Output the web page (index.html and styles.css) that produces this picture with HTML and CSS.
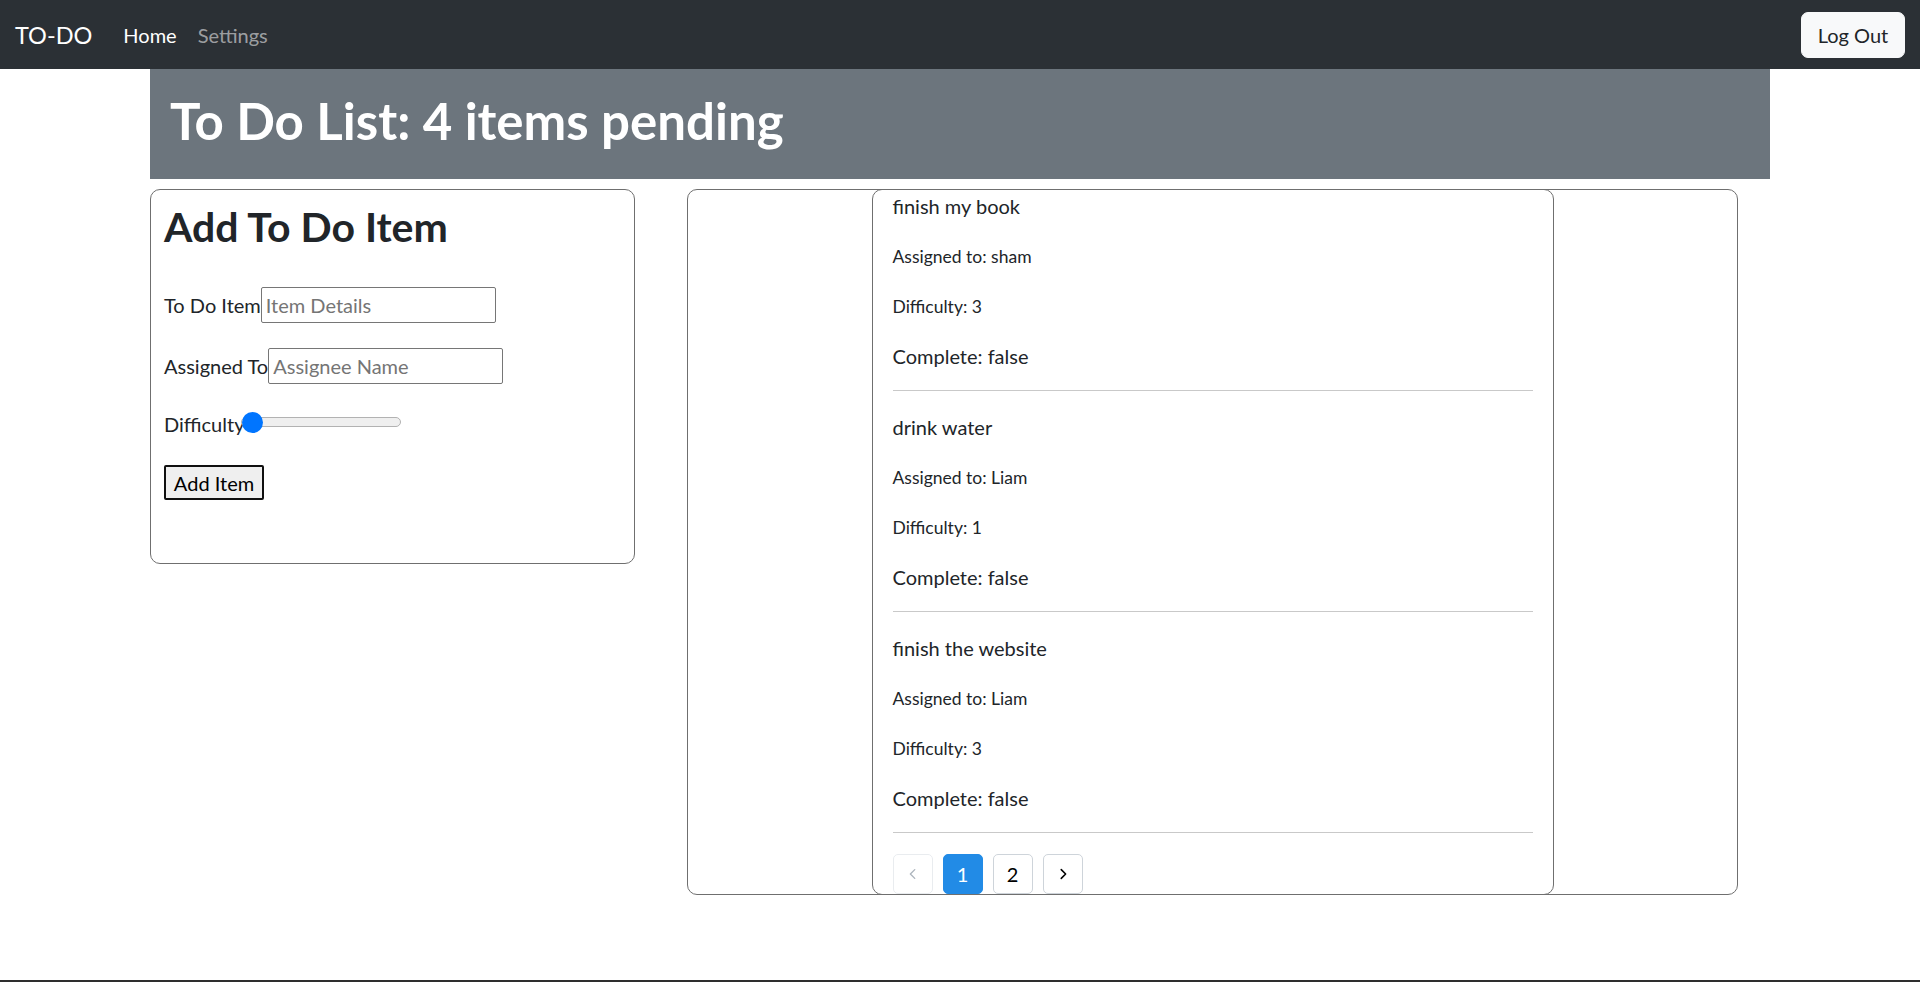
FILE: index.html
```html
<!DOCTYPE html>
<html lang="en">
<head>
<meta charset="utf-8">
<title>To Do List</title>
<link rel="stylesheet" href="styles.css">
</head>
<body>
<nav class="navbar">
  <div class="nav-left">
    <span class="brand">TO-DO</span>
    <a class="nav-link active" href="#">Home</a>
    <a class="nav-link" href="#">Settings</a>
  </div>
  <button class="logout" type="button">Log Out</button>
</nav>
<main class="container">
  <header class="banner"><h1>To Do List: 4 items pending</h1></header>
  <section class="content">
    <form class="add-card">
      <h2>Add To Do Item</h2>
      <label class="field">To Do Item<input class="text-input" type="text" placeholder="Item Details"></label>
      <label class="field">Assigned To<input class="text-input" type="text" placeholder="Assignee Name"></label>
      <label class="field range-field">Difficulty<input class="range" type="range" min="1" max="5" value="1"></label>
      <div class="btn-row"><button class="add-btn" type="button">Add Item</button></div>
    </form>
    <div class="list-card">
      <div class="list">
        <div class="item">
          <p class="item-title">finish my book</p>
          <p class="item-meta">Assigned to: sham</p>
          <p class="item-meta last">Difficulty: 3</p>
          <p class="item-status">Complete: false</p>
          <hr class="divider">
        </div>
        <div class="item">
          <p class="item-title">drink water</p>
          <p class="item-meta">Assigned to: Liam</p>
          <p class="item-meta last">Difficulty: 1</p>
          <p class="item-status">Complete: false</p>
          <hr class="divider">
        </div>
        <div class="item">
          <p class="item-title">finish the website</p>
          <p class="item-meta">Assigned to: Liam</p>
          <p class="item-meta last">Difficulty: 3</p>
          <p class="item-status">Complete: false</p>
          <hr class="divider">
        </div>
        <div class="pagination">
          <button class="page-btn disabled" type="button" aria-label="previous">
            <svg width="14" height="14" viewBox="0 0 16 16"><path d="M10 3 L5 8 L10 13" fill="none" stroke="currentColor" stroke-width="1.6" stroke-linecap="round" stroke-linejoin="round"/></svg>
          </button>
          <button class="page-btn active" type="button">1</button>
          <button class="page-btn" type="button">2</button>
          <button class="page-btn" type="button" aria-label="next">
            <svg width="14" height="14" viewBox="0 0 16 16"><path d="M6 3 L11 8 L6 13" fill="none" stroke="currentColor" stroke-width="1.8" stroke-linecap="round" stroke-linejoin="round"/></svg>
          </button>
        </div>
      </div>
    </div>
  </section>
</main>
<div class="taskbar-edge"></div>
</body>
</html>
```

FILE: styles.css
```css
* { box-sizing: border-box; }

html, body {
  margin: 0;
  padding: 0;
  background: #ffffff;
}

body {
  font-family: Lato, "Open Sans", "Liberation Sans", sans-serif;
  font-size: 20px;
  color: #212529;
  min-height: 982px;
}

/* ---------- navbar ---------- */
.navbar {
  height: 69px;
  background: #2b3035;
  display: flex;
  align-items: center;
  justify-content: space-between;
  padding: 0 15px;
}

.nav-left {
  display: flex;
  align-items: center;
}

.brand {
  color: #ffffff;
  font-size: 23.5px;
  margin-right: 31px;
}

.nav-link {
  color: rgba(255, 255, 255, 0.55);
  text-decoration: none;
  font-size: 20px;
  margin-right: 21px;
}

.nav-link.active {
  color: #ffffff;
}

.logout {
  width: 104px;
  height: 46px;
  background: #f8f9fa;
  border: 1px solid #f8f9fa;
  border-radius: 7px;
  font-family: inherit;
  font-size: 20px;
  color: #212529;
  padding: 0;
}

/* ---------- container ---------- */
.container {
  width: 1620px;
  margin-left: 150px;
}

.banner {
  height: 110px;
  background: #6c757d;
  display: flex;
  align-items: center;
  padding-left: 20px;
  padding-bottom: 8px;
}

.banner h1 {
  margin: 0;
  color: #ffffff;
  font-size: 51px;
  font-weight: 700;
  line-height: 1;
}

.content {
  display: flex;
  align-items: flex-start;
  gap: 52px;
  margin-top: 10px;
}

/* ---------- add form card ---------- */
.add-card {
  width: 485px;
  height: 375px;
  border: 1px solid #6f6f6f;
  border-radius: 10px;
  padding: 13px 13px;
  display: flex;
  flex-direction: column;
}

.add-card h2 {
  margin: 0 0 36px 0;
  font-size: 41px;
  font-weight: 700;
  line-height: 48px;
}

.field {
  display: flex;
  align-items: center;
  height: 36px;
  margin-bottom: 25px;
  font-size: 20px;
}

.text-input {
  width: 235px;
  height: 36px;
  border: 1px solid #767676;
  border-radius: 2px;
  padding: 1px 4px;
  font-family: inherit;
  font-size: 20px;
  color: #212529;
}

.text-input::placeholder {
  color: #757575;
}

.range-field {
  height: 30px;
  margin-bottom: 26px;
}

.range {
  -webkit-appearance: none;
  appearance: none;
  width: 160px;
  height: 22px;
  margin: 0 0 0 -3px;
  background: transparent;
  position: relative;
  top: -2px;
}

.range::-webkit-slider-runnable-track {
  height: 10px;
  background: #efefef;
  border: 1px solid #b2b2b2;
  border-radius: 5px;
}

.range::-webkit-slider-thumb {
  -webkit-appearance: none;
  appearance: none;
  width: 21px;
  height: 21px;
  border-radius: 50%;
  background: #0075ff;
  border: none;
  margin-top: -6.5px;
}

.btn-row {
  display: flex;
}

.add-btn {
  width: 100px;
  height: 35px;
  background: #efefef;
  border: 2px solid #101010;
  border-radius: 2px;
  font-family: inherit;
  font-size: 20px;
  color: #000000;
  padding: 0;
}

/* ---------- list card ---------- */
.list-card {
  width: 1051px;
  border: 1px solid #6f6f6f;
  border-radius: 10px;
  display: flex;
  justify-content: center;
}

.list {
  width: 682px;
  margin: -1px 0;
  border: 1px solid #6f6f6f;
  border-radius: 10px;
  padding: 1px 20px 0 20px;
  overflow: hidden;
}

.item p {
  margin: 0;
}

.item-title {
  font-size: 20px;
  line-height: 30px;
  margin-bottom: 23px !important;
}

.item-meta {
  font-size: 17.5px;
  line-height: 26px;
  margin-bottom: 24px !important;
}

.item-meta.last {
  margin-bottom: 21px !important;
}

.item-status {
  font-size: 20px;
  line-height: 30px;
  margin-bottom: 19px !important;
}

.divider {
  margin: 0 0 21px 0;
  border: 0;
  border-top: 1px solid #c9c9c9;
  height: 0;
}

.pagination {
  display: flex;
  gap: 10px;
  height: 40px;
}

.page-btn {
  width: 40px;
  height: 40px;
  padding: 0;
  border: 1px solid #ced4da;
  border-radius: 5px;
  background: #ffffff;
  font-family: inherit;
  font-size: 20px;
  color: #000000;
  display: flex;
  align-items: center;
  justify-content: center;
}

.page-btn.active {
  background: #228be6;
  border-color: #228be6;
  color: #ffffff;
}

.page-btn.disabled {
  border-color: #e9ecef;
  color: #adb5bd;
}

.taskbar-edge {
  position: fixed;
  left: 0;
  right: 0;
  bottom: 0;
  height: 2px;
  background: #2e2e2e;
}
```
